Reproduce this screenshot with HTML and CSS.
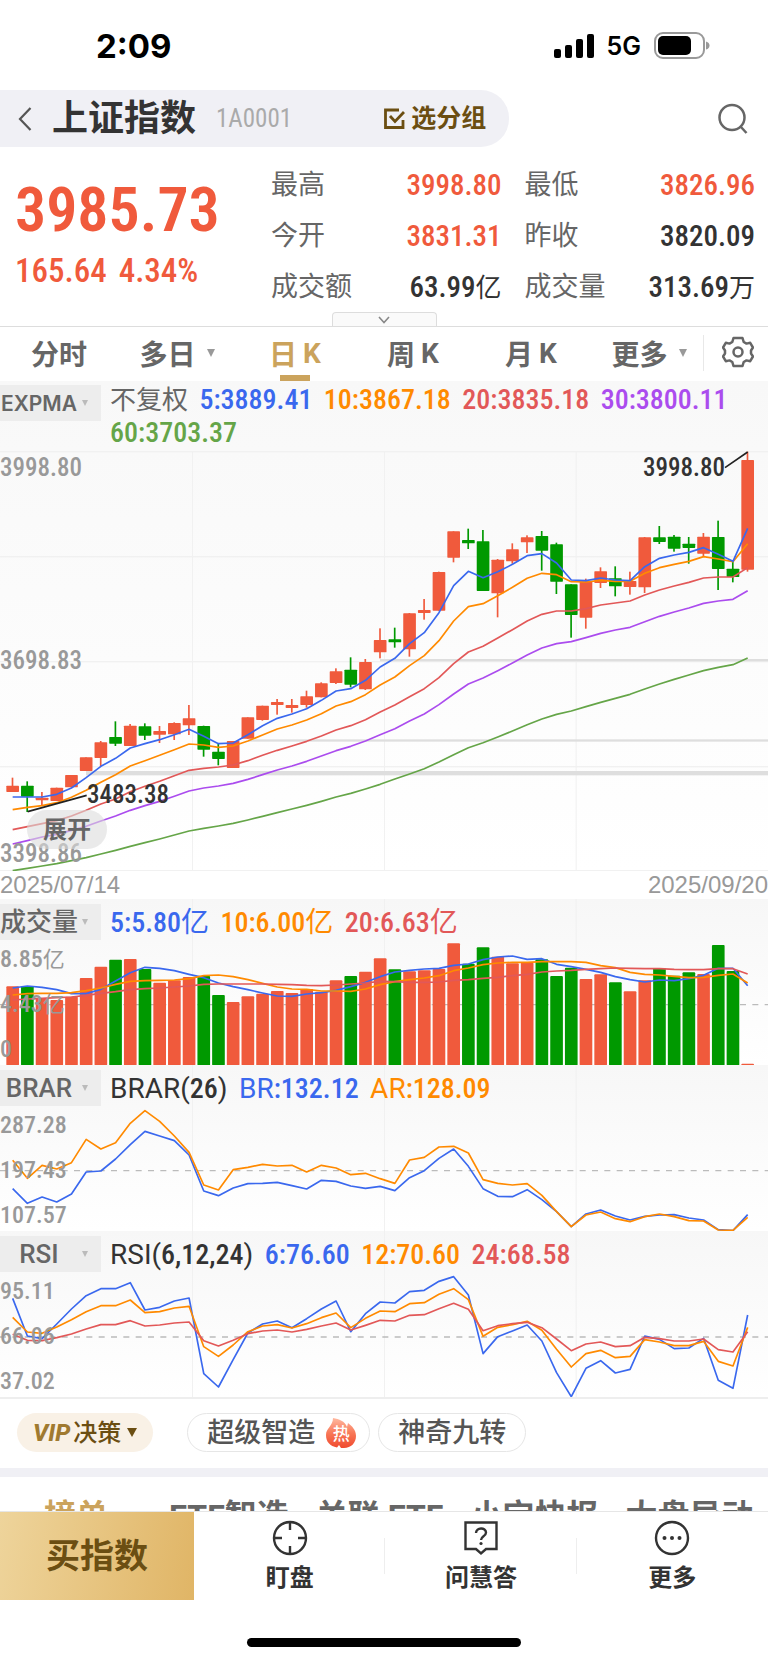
FILE: index.html
```html
<!DOCTYPE html>
<html lang="zh-CN">
<head>
<meta charset="utf-8">
<meta name="viewport" content="width=device-width, initial-scale=1">
<title>上证指数</title>
<link rel="stylesheet" href="styles.css">
</head>
<body>
<div class="status">
  <span class="clock">2:09</span>
  <div class="status-right">
    <svg width="40" height="26" viewBox="0 0 40 26"><rect x="0" y="16" width="7" height="9" rx="2"/><rect x="11" y="12" width="7" height="13" rx="2"/><rect x="22" y="6" width="7" height="19" rx="2"/><rect x="33" y="1" width="7" height="24" rx="2"/></svg>
    <span class="net">5G</span>
    <svg width="56" height="28" viewBox="0 0 56 28"><rect x="1" y="1" width="49" height="25" rx="8" fill="none" stroke="#999" stroke-width="2"/><rect x="4" y="4" width="33" height="19" rx="5"/><path d="M52 9.500q3.500 1 3.500 4t-3.500 4z" fill="#999"/></svg>
  </div>
</div>

<header class="top">
  <div class="title-pill">
    <button class="back" aria-label="返回"><svg width="14" height="24" viewBox="0 0 14 24"><path d="M12.500 1L2 12l10.500 11" fill="none" stroke="#555" stroke-width="2.200"/></svg></button>
    <h1>上证指数</h1>
    <span class="code">1A0001</span>
    <button class="group"><svg width="21" height="21" viewBox="0 0 21 21" fill="none" stroke="#6b4e12" stroke-width="2.800"><path d="M15 2H1.500v17.500h17.500V12"/><path d="M6 8l5 5.500L20 4"/></svg>选分组</button>
  </div>
  <button class="search" aria-label="搜索"><svg width="32" height="32" viewBox="0 0 32 32" fill="none" stroke="#666" stroke-width="2.500"><circle cx="15" cy="14.500" r="12.500"/><path d="M23.500 23.500l6 6.500"/></svg></button>
</header>

<section class="quote">
  <div class="price">
    <strong>3985.73</strong>
    <p><span>165.64</span><span>4.34%</span></p>
  </div>
  <dl class="stats">
    <div><dt>最高</dt><dd class="up">3998.80</dd></div>
    <div><dt>最低</dt><dd class="up">3826.96</dd></div>
    <div><dt>今开</dt><dd class="up">3831.31</dd></div>
    <div><dt>昨收</dt><dd>3820.09</dd></div>
    <div><dt>成交额</dt><dd>63.99<i>亿</i></dd></div>
    <div><dt>成交量</dt><dd>313.69<i>万</i></dd></div>
  </dl>
</section>
<div class="expand"><button aria-label="展开行情"><svg width="12" height="8" viewBox="0 0 12 8"><path d="M1 1l5 5.500L11 1" fill="none" stroke="#888" stroke-width="1.600"/></svg></button></div>

<nav class="periods">
  <button>分时</button>
  <button>多日<i class="caret"></i></button>
  <button class="on">日<b>K</b></button>
  <button>周<b>K</b></button>
  <button>月<b>K</b></button>
  <button>更多<i class="caret"></i></button>
  <button class="gear" aria-label="设置"><svg width="32" height="32" viewBox="0 0 32 32" fill="none" stroke="#666" stroke-width="2.500" stroke-linejoin="round"><path d="M11.500 2h9l1.200 4 2.800 1.600 3.700-.8 2.800 4.700-2 3v3l2 3-2.800 4.700-3.700-.8-2.800 1.600-1.200 4h-9l-1.200-4-2.800-1.600-3.700.8L1 20.500l2-3v-3l-2-3 2.800-4.700 3.700.8L10.300 6z"/><circle cx="16" cy="16" r="4.500"/></svg></button>
</nav>

<section class="kline">
  <div class="legend wrap">
    <button class="pick small"><span>EXPMA</span><i class="caret"></i></button>
    <p><i class="grey">不复权</i> <span class="c-blue">5:3889.41</span> <span class="c-orange">10:3867.18</span> <span class="c-red">20:3835.18</span> <span class="c-purple">30:3800.11</span> <span class="c-green">60:3703.37</span></p>
  </div>
  <div class="plot">
    <svg id="k" viewBox="0 0 2304 1260" preserveAspectRatio="none"></svg>
    <div class="axis"><span>3998.80</span><span>3698.83</span><span>3398.86</span></div>
    <span class="mark high">3998.80</span>
    <span class="mark low">3483.38</span>
    <button class="unfold">展开</button>
  </div>
</section>
<div class="dates"><span>2025/07/14</span><span>2025/09/20</span></div>

<section class="sub">
  <svg id="vol" viewBox="0 0 2304 498" preserveAspectRatio="none"></svg>
  <div class="over">
    <div class="legend"><button class="pick"><span>成交量</span><i class="caret"></i></button>
    <p><span class="c-blue">5:5.80<i>亿</i></span> <span class="c-orange">10:6.00<i>亿</i></span> <span class="c-red">20:6.63<i>亿</i></span></p></div>
    <div class="axis"><span>8.85<i>亿</i></span><span>4.43<i>亿</i></span><span>0</span></div>
  </div>
</section>

<section class="sub">
  <svg id="brar" viewBox="0 0 2304 498" preserveAspectRatio="none"></svg>
  <div class="over">
    <div class="legend"><button class="pick"><span>BRAR</span><i class="caret"></i></button>
    <p><span><i>BRAR(</i>26<i>)</i></span> <span class="c-blue"><i>BR</i>:132.12</span> <span class="c-orange"><i>AR</i>:128.09</span></p></div>
    <div class="axis"><span>287.28</span><span>197.43</span><span>107.57</span></div>
  </div>
</section>

<section class="sub last">
  <svg id="rsi" viewBox="0 0 2304 498" preserveAspectRatio="none"></svg>
  <div class="over">
    <div class="legend"><button class="pick"><span>RSI</span><i class="caret"></i></button>
    <p><span><i>RSI(</i>6,12,24<i>)</i></span> <span class="c-blue">6:76.60</span> <span class="c-orange">12:70.60</span> <span class="c-red">24:68.58</span></p></div>
    <div class="axis"><span>95.11</span><span>66.06</span><span>37.02</span></div>
  </div>
</section>

<div class="chips">
  <button class="vip"><em>VIP</em>决策<i class="caret"></i></button>
  <button class="chip">超级智造<span class="hot"><svg width="32" height="32" viewBox="0 0 32 32"><defs><linearGradient id="fire" x1="0" y1="0" x2="0" y2="1"><stop offset="0" stop-color="#ffb9a0"/><stop offset=".5" stop-color="#f87858"/><stop offset="1" stop-color="#f04a2e"/></linearGradient></defs><path fill="url(#fire)" d="M8 1c6 1 12 3 14 9l1-4c4 3 8 7 8 13 0 7-5 12-12 12h-3l-2-3-2 2.500C5 29 1 25 1 18 1 11 8 9 8 1z"/></svg><b>热</b></span></button>
  <button class="chip">神奇九转</button>
</div>

<nav class="feed">
  <a href="#rank" class="on">榜单</a><a href="#etf">ETF智造</a><a href="#related">关联 ETF</a><a href="#news">小宝快报</a><a href="#moves">大盘异动</a>
</nav>

<footer>
  <div class="actions">
    <button class="buy">买指数</button>
    <button><svg width="36" height="36" viewBox="0 0 36 36" fill="none" stroke="#333" stroke-width="2.400"><circle cx="18" cy="18" r="16"/><path d="M18 2v8M18 26v8M2 18h8M26 18h8"/></svg>盯盘</button>
    <button><svg width="36" height="36" viewBox="0 0 36 36" fill="none" stroke="#333" stroke-width="2.400"><path d="M2.500 2.500h31v26.500H23l-5 4.500-5-4.500H2.500z"/><path d="M13 13c0-6 10-6 10-.5 0 4-5 3.500-5 7.500"/><circle cx="18" cy="23.500" r="1.600" fill="#333" stroke="none"/></svg>问慧答</button>
    <button><svg width="36" height="36" viewBox="0 0 36 36" fill="none" stroke="#333" stroke-width="2.400"><circle cx="18" cy="18" r="16"/><g fill="#333" stroke="none"><circle cx="10.500" cy="18" r="2"/><circle cx="18" cy="18" r="2"/><circle cx="25.500" cy="18" r="2"/></g></svg>更多</button>
  </div>
  <div class="home"></div>
</footer>
<script src="chart.js"></script>
</body>
</html>
```
FILE: styles.css
```css
* { box-sizing: border-box; }
body {
  margin: 0;
  background: #fff;
  color: #333;
  font-family: "Roboto Condensed", Roboto, "Noto Sans CJK SC", sans-serif;
}
button {
  margin: 0;
  padding: 0;
  border: 0;
  background: none;
  color: inherit;
  font: inherit;
  cursor: pointer;
}
i { font-style: normal; font-weight: 400; }
svg { display: block; }

.status {
  display: flex;
  justify-content: space-between;
  align-items: center;
  height: 90px;
  padding: 2px 58px 0 96px;
  color: #000;
}
.clock { font: 700 33px Inter, sans-serif; }
.status-right { display: flex; align-items: center; gap: 13px; }
.net { font: 600 25px Inter, sans-serif; }

.top { display: flex; justify-content: space-between; align-items: center; padding-right: 19px; }
.title-pill {
  display: flex;
  align-items: center;
  width: 68%;
  height: 57px;
  padding: 0 23px 0 18px;
  background: #f0f0f5;
  border-radius: 0 28px 28px 0;
}
h1 { margin: 0 20px; font-size: 36px; line-height: 56px; font-weight: 700; }
.code { color: #aaa; font-size: 25px; }
.group { display: flex; align-items: center; gap: 6px; margin-left: auto; color: #6b4e12; font-size: 25px; line-height: 36px; font-weight: 700; }

.quote { display: flex; padding: 12px 13px 0 15px; }
.price { flex: 0 0 256px; display: flex; flex-direction: column; color: #f05a3c; }
.price strong { padding-top: 13px; font-size: 62px; line-height: 76px; font-weight: 600; }
.price p { display: flex; gap: 12px; margin: 0; padding-top: 3px; font-size: 33px; line-height: 40px; font-weight: 500; }
.stats { flex: 1; display: grid; grid-template-columns: 1fr 1fr; column-gap: 23px; margin: 0; }
.stats div { display: flex; justify-content: space-between; align-items: center; height: 51px; }
.stats dt { color: #666; font-size: 27px; line-height: 36px; }
.stats dd { margin: 0; font-size: 29px; line-height: 36px; font-weight: 500; }
.stats dd i { font-size: 26px; line-height: 30px; }
.stats .up { color: #f05a3c; }
.expand { display: flex; justify-content: center; border-bottom: 1px solid #ddd; }
.expand button {
  display: grid;
  place-items: center;
  width: 105px;
  height: 14px;
  background: #fafafa;
  border: 1px solid #ddd;
  border-bottom: 0;
  border-radius: 4px 4px 0 0;
}

.caret { width: 0; height: 0; border: 4px solid transparent; border-top: 8px solid #999; border-bottom: 0; }
.periods { display: flex; height: 54px; color: #666; font-size: 28px; font-weight: 700; }
.periods button { position: relative; flex: 1; display: flex; justify-content: center; align-items: center; padding-bottom: 2px; }
.periods .caret { margin-left: 11px; }
.periods b { margin-left: 6px; font-family: Roboto, sans-serif; font-weight: 700; }
.periods .on { color: #cba35c; }
.periods .on::after { content: ""; position: absolute; bottom: 0; width: 30px; height: 6px; background: #cba35c; }
.periods .gear { flex: 0 0 65px; margin: 8px 0 10px -5px; border-left: 1px solid #e8e8e8; padding-left: 4px; }

.kline { background: linear-gradient(#f8f8f8, #fff); }
.legend { display: flex; height: 41px; padding-top: 5px; }
.legend.wrap { height: 70px; padding-top: 4px; }
.pick {
  flex: 0 0 101px;
  display: flex;
  align-items: center;
  justify-content: space-between;
  height: 36px;
  padding-right: 13px;
  background: #ededed;
  color: #666;
  font: 500 26px/34px Roboto, "Noto Sans CJK SC", sans-serif;
}
.pick span { flex: 0 0 78px; text-align: center; }
.pick.small { font: 600 21px Inter, sans-serif; }
.pick .caret { border-width: 3px; border-top: 6px solid #bbb; border-bottom: 0; }
.legend p { margin: 0 0 0 9px; font-size: 28px; font-weight: 500; line-height: 37px; word-spacing: 5px; }
.legend p i { font-family: Roboto, "Noto Sans CJK SC", sans-serif; font-size: 28px; line-height: 30px; }
.legend p .grey { color: #666; font-size: 26px; }
.legend.wrap p { margin-top: -2px; line-height: 33px; }
.c-blue { color: #3a68ee; }
.c-orange { color: #ff8a00; }
.c-red { color: #e25858; }
.c-purple { color: #ab4cee; }
.c-green { color: #65a548; }

.plot { position: relative; display: grid; }
.plot svg { grid-area: 1 / 1; width: 100%; height: 420px; }
.plot .axis { grid-area: 1 / 1; display: flex; flex-direction: column; justify-content: space-between; padding: 2px 0; }
.axis span { color: #999; font-size: 25px; line-height: 30px; font-weight: 500; }
.mark { position: absolute; font-size: 25px; line-height: 30px; font-weight: 500; }
.high { top: 2px; right: 43px; }
.low { left: 87px; bottom: 61px; }
.unfold {
  position: absolute;
  left: 27px;
  bottom: 22px;
  width: 80px;
  height: 39px;
  border-radius: 20px;
  background: rgba(220, 220, 220, 0.6);
  color: #666;
  font-size: 24px;
  line-height: 36px;
  font-weight: 700;
}
.dates { display: flex; justify-content: space-between; color: #999; font: 24px/28px "Liberation Sans", sans-serif; }

.sub { display: grid; background: linear-gradient(#f7f7f7, #fff); }
.sub > * { grid-area: 1 / 1; }
.sub svg { width: 100%; height: 166px; }
.over { display: flex; flex-direction: column; }
.sub .axis { display: flex; flex-direction: column; gap: 15px; padding-top: 4px; }
.sub .axis span { height: 30px; font-size: 24px; }
.sub .axis i { font-size: 22px; line-height: 24px; }
.sub.last { border-bottom: 2px solid #eee; }

.chips { display: flex; align-items: flex-start; height: 69px; padding: 14px 17px 0; font-size: 27px; line-height: 36px; font-weight: 500; }
.chips button { display: flex; align-items: center; height: 39px; border-radius: 20px; }
.vip { padding: 0 16px; margin-right: 34px; background: #f9f1e6; color: #6b4e12; font-size: 24px; }
.vip em { margin-right: 3px; font: italic 800 24px Roboto, sans-serif; color: #a07a30; }
.vip .caret { margin-left: 6px; border-width: 5px; border-top: 9px solid #6b4e12; border-bottom: 0; }
.chip { padding: 0 19px; margin-right: 8px; border: 1px solid #e6e6e6; color: #555; }
.hot { display: grid; place-items: center; margin: 0 -7px 0 10px; }
.hot > * { grid-area: 1 / 1; }
.hot b { padding-top: 3px; color: #fff; font-size: 17px; line-height: 20px; font-weight: 500; }

.feed {
  display: flex;
  gap: 27px;
  height: 43px;
  padding: 23px 0 0 44px;
  overflow: hidden;
  border-top: 9px solid #f0f0f5;
  white-space: nowrap;
}
.feed a { color: #666; font: 700 32px/32px Roboto, "Noto Sans CJK SC", sans-serif; text-decoration: none; }
.feed .on { margin-right: 34px; color: #cba35c; }

footer { position: relative; background: #fff; }
.actions { display: grid; grid-template-columns: 194px 1fr 1fr 1fr; height: 89px; border-top: 1px solid #e6e6e6; }
.actions button {
  display: flex;
  flex-direction: column;
  align-items: center;
  padding-top: 8px;
  gap: 6px;
  font-size: 24px;
  line-height: 32px;
  font-weight: 700;
  background: linear-gradient(#eee, #eee) right center / 1px 36px no-repeat;
}
.actions button:last-child { background: none; }
.actions .buy { justify-content: center; padding: 0; background: linear-gradient(100deg, #eed49b, #e0b566); color: #6b4e12; font-size: 34px; }
.home { width: 274px; height: 9px; margin: 38px auto 15px; border-radius: 5px; background: #000; }
```
FILE: chart.js
```javascript
const COUNT = 51, FIRST = 38, STEP = 44.1;
const UP = '#f05a3c', DOWN = '#009900';
const COLORS = { blue: '#3a68ee', orange: '#ff8a00', red: '#e25858', purple: '#ab4cee', green: '#65a548' };
const x = i => FIRST + STEP * i;
const nums = s => s.trim().split(/[\s,]+/).map(Number);

function add(id, markup) { document.getElementById(id).insertAdjacentHTML('beforeend', markup); }
function rect(id, rx, y, w, h, fill, r = 0) {
  add(id, `<rect x="${rx}" y="${y}" width="${w}" height="${h}" rx="${r}" fill="${fill}"/>`);
}
function line(id, color, values, shift = 0) {
  const pts = nums(values).map((v, i) => `${x(i).toFixed(1)},${v + shift}`).join(' ');
  add(id, `<polyline points="${pts}" fill="none" stroke="${COLORS[color]}" stroke-width="5" stroke-linejoin="round"/>`);
}
function columns(id, h) { [577, 1153, 1728].forEach(v => rect(id, v - 1, 0, 3, h, '#f1f1f1')); }
function middle(id, y) {
  add(id, `<path d="M0 ${y}H2304" stroke="#bbb" stroke-width="4" stroke-dasharray="18 19"/>`);
}

/* high, body top, body bottom, low */
const candles = nums(`980 1004 1023 1023, 991 1004 1037 1083, 1023 1040 1048 1065, 1010 1010 1050 1050,
972 972 1009 1009, 919 919 960 960, 870 874 921 946, 811 858 878 885, 819 824 885 885, 817 826 854 867,
825 840 851 876, 814 816 850 867, 762 802 823 852, 824 825 896 917, 879 902 924 943, 870 870 951 951,
799 799 863 863, 764 764 807 809, 744 753 762 791, 744 762 771 785, 719 736 762 770, 694 697 739 739,
652 661 696 699, 619 656 701 709, 624 633 715 717, 532 567 604 622, 530 565 574 590, 486 487 595 617,
444 477 486 506, 362 363 479 479, 241 241 320 334, 233 267 277 294, 237 271 420 420, 324 326 427 499,
277 295 331 338, 253 259 274 306, 240 255 299 359, 275 280 392 429, 400 400 492 560, 383 391 500 533,
349 361 396 411, 346 382 406 436, 362 390 408 431, 258 259 409 426, 225 259 273 279, 252 257 293 302,
258 278 291 338, 246 257 308 317, 209 258 354 417, 332 353 378 394, 2 27 356 362`);
const falling = new Set([1, 7, 9, 13, 14, 23, 26, 31, 32, 36, 37, 38, 41, 44, 45, 46, 48, 49]);
const tone = i => falling.has(i) ? DOWN : UP;

columns('k', 1260);
[0, 315, 630, 945, 1257].forEach(y => rect('k', 0, y, 2304, 4, '#f1f1f1'));
rect('k', 1140, 624, 1164, 7, '#dedede');
rect('k', 745, 865, 1559, 7, '#dedede');
rect('k', 258, 960, 2046, 13, '#dedede');
for (let i = 0; i < COUNT; i++) {
  const [hi, top, bottom, lo] = candles.slice(i * 4, i * 4 + 4);
  rect('k', x(i) - 3, hi, 5, lo - hi, tone(i));
  rect('k', x(i) - 19, top, 38, bottom - top, tone(i), 2);
}
line('k', 'green', `1259 1252 1245 1238 1229 1220 1209 1198 1186 1175 1164 1152 1140 1132 1125 1117 1107 1096 1085 1074 1063 1051 1038 1027 1014 1000 984 969 953 933 911 890 875 858 840 821 804 790 780 767 754 742 730 714 699 685 672 659 649 641 621`);
line('k', 'purple', `1179 1169 1158 1150 1138 1126 1110 1095 1078 1064 1051 1036 1020 1011 1005 997 985 971 957 945 931 915 899 886 870 851 833 810 789 761 729 699 681 659 636 612 591 578 572 560 547 537 529 512 496 483 471 457 450 445 419`);
line('k', 'red', `1136 1127 1118 1109 1095 1078 1059 1044 1022 1006 991 974 958 952 948 942 929 913 898 885 871 855 837 824 806 783 762 737 713 680 638 603 586 561 536 510 490 480 480 473 462 456 450 432 417 405 394 381 378 378 350`);
line('k', 'orange', `1076 1069 1064 1055 1039 1018 994 971 945 929 913 896 879 882 889 885 870 852 834 822 807 788 765 752 731 702 678 644 614 569 510 467 458 434 409 382 367 371 392 393 388 391 391 367 350 340 331 317 324 332 278`);
line('k', 'blue', `1038 1038 1038 1030 1011 980 946 922 891 878 866 851 835 856 878 876 851 824 802 789 773 748 720 713 688 648 622 578 545 485 404 361 380 362 340 314 308 336 387 389 381 387 389 347 322 312 304 290 310 331 232`);
add('k', '<path d="M2175 50L2243 3M83 1082L260 1033" stroke="#222" stroke-width="5"/>');

columns('vol', 498);
middle('vol', 317);
nums(`259 259 295 300 290 234 200 179 177 207 248 241 231 228 285 306 289 281 273 279 267 275 241 228 215 175
208 214 211 207 130 191 142 170 190 188 178 228 203 237 223 247 274 241 205 227 217 222 135 213 491`)
  .forEach((top, i) => rect('vol', x(i) - 19, top + 3, 38, 496 - top, tone(i), 3));
line('vol', 'blue', `264 258 262 269 281 281 268 243 218 202 205 212 223 233 249 260 269 279 288 289 282 278 271 260 247 230 216 211 207 205 196 192 179 171 168 178 176 193 200 208 217 230 239 246 240 242 236 226 205 205 257`, 3);
line('vol', 'orange', `285 281 280 280 278 272 264 253 244 242 241 240 236 227 225 230 239 250 261 267 268 273 273 274 267 254 245 239 234 227 212 204 194 189 187 187 185 185 185 187 197 203 217 223 225 229 233 232 226 222 249`, 3);
line('vol', 'red', `300 297 295 293 291 286 280 275 269 266 264 261 258 253 252 252 252 252 253 254 256 257 255 252 249 244 245 247 247 246 241 239 235 232 227 223 216 213 211 208 206 204 205 206 206 208 209 209 206 206 222`, 3);

columns('brar', 498);
middle('brar', 317);
line('brar', 'blue', `371 415 396 411 387 321 318 282 239 199 213 227 270 378 392 369 356 355 352 362 372 346 349 363 370 364 377 338 317 280 252 304 371 394 395 374 404 440 485 447 435 453 465 454 450 449 459 465 494 497 449`);
line('brar', 'orange', `286 340 301 312 293 223 252 233 175 137 169 213 262 360 375 314 307 298 303 301 321 301 309 329 325 341 355 285 277 246 244 264 344 355 360 356 391 440 485 450 441 461 470 455 447 455 467 468 495 496 457`);

columns('rsi', 498);
middle('rsi', 318);
line('rsi', 'blue', `700 813 821 777 732 692 671 671 653 735 727 708 699 926 966 884 804 777 768 788 761 732 708 800 746 711 714 680 676 649 635 690 866 815 798 780 828 923 995 910 887 924 913 813 823 851 849 820 946 970 750`, -498);
line('rsi', 'orange', `757 801 805 786 764 740 722 722 705 743 740 729 724 845 874 840 800 783 779 789 776 758 744 788 760 738 740 716 713 688 671 704 814 787 779 769 796 853 906 866 856 878 874 824 831 842 842 829 889 903 787`, -498);
line('rsi', 'red', `808 826 827 818 807 792 779 779 767 783 780 774 771 827 843 826 806 798 795 801 793 783 774 795 781 766 768 751 749 731 715 733 797 782 776 772 788 822 857 837 831 845 842 817 821 828 828 822 854 861 800`, -498);
```
